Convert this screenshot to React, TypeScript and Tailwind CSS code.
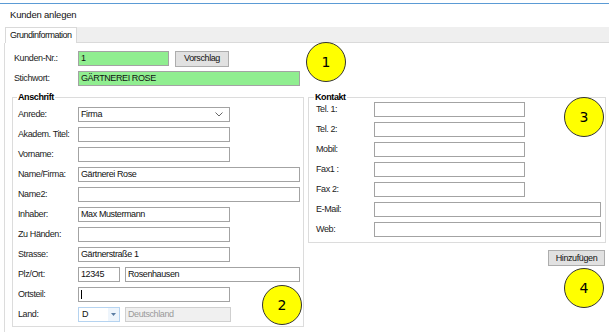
import { ReactNode } from "react";

const FONT = "font-['Liberation_Sans',Arial,sans-serif]";

function Field({
  value = "",
  width,
  green = false,
  cursor = false,
}: {
  value?: string;
  width: string;
  green?: boolean;
  cursor?: boolean;
}) {
  return (
    <div
      className={`${width} h-[15px] border border-[#a3a3a3] ${
        green ? "bg-[#90ee90]" : "bg-white"
      } flex items-center px-[2px] text-[9px] leading-none tracking-[-0.4px] text-[#111]`}
    >
      {cursor && <span className="w-px h-[9px] bg-black" />}
      {value}
    </div>
  );
}

function Row({ label, labelWidth, children }: { label: string; labelWidth: string; children: ReactNode }) {
  return (
    <div className="flex items-center h-[15px]">
      <span className={`${labelWidth} shrink-0 text-[9px] leading-none tracking-[-0.4px] text-[#222]`}>{label}</span>
      {children}
    </div>
  );
}

function Marker({ n, pos }: { n: number; pos: string }) {
  return (
    <div
      className={`absolute ${pos} w-[40px] h-[40px] rounded-full bg-[#ffff00] border border-[#333] flex items-center justify-center text-[14px] text-black font-['DejaVu_Sans',sans-serif]`}
    >
      {n}
    </div>
  );
}

export default function App() {
  return (
    <div className={`relative w-[613px] h-[332px] bg-white overflow-hidden ${FONT}`}>
      {/* Fensterrahmen oben */}
      <div className="mt-[3px] h-px w-[609px] bg-[#5b9bd5]" />
      <div className="h-[23px] pl-[10px] flex items-center text-[9.5px] tracking-[-0.2px] text-[#111]">
        Kunden anlegen
      </div>

      {/* Tabs */}
      <div className="flex h-[16px] w-[609px]">
        <div className="ml-[5px] w-[72px] h-[16px] bg-white border border-b-0 border-[#d9d9d9] flex items-center pl-[4px] text-[9px] tracking-[-0.5px] text-[#111]">
          Grundinformation
        </div>
        <div className="flex-1 bg-[#efefef] border-b border-[#dadada]" />
      </div>

      {/* Tab-Inhalt */}
      <div className="ml-[4px] h-[289px] border-l border-[#dcdcdc] pl-[7px] pt-[8px]">
        <div className="flex flex-col gap-[5px] pl-[2px]">
          <Row label="Kunden-Nr.:" labelWidth="w-[64px]">
            <Field width="w-[91px]" green value="1" />
            <button className="ml-[6px] w-[54px] h-[16px] bg-[#e1e1e1] border border-[#adadad] text-[9px] tracking-[-0.4px] text-[#111] leading-none">
              Vorschlag
            </button>
          </Row>
          <Row label="Stichwort:" labelWidth="w-[64px]">
            <Field width="w-[222px]" green value="GÄRTNEREI ROSE" />
          </Row>
        </div>

        <div className="flex gap-[4px] mt-[6px]">
          {/* Anschrift */}
          <fieldset className="w-[292px] h-[235px] border border-[#dcdcdc] pl-[5px] pt-[5px]">
            <legend className="-ml-px px-[1px] text-[9px] leading-[10px] font-bold tracking-[-0.4px] text-black">
              Anschrift
            </legend>
            <div className="flex flex-col gap-[5px]">
              <Row label="Anrede:" labelWidth="w-[60px]">
                <div className="w-[152px] h-[15px] border border-[#a3a3a3] flex items-center justify-between px-[2px] text-[9px] tracking-[-0.4px] text-[#111]">
                  Firma
                  <svg width="8" height="5" viewBox="0 0 8 5" className="mr-[4px]">
                    <path d="M0.5 0.5 L4 4 L7.5 0.5" fill="none" stroke="#666" strokeWidth="1" />
                  </svg>
                </div>
              </Row>
              <Row label="Akadem. Titel:" labelWidth="w-[60px]">
                <Field width="w-[152px]" />
              </Row>
              <Row label="Vorname:" labelWidth="w-[60px]">
                <Field width="w-[152px]" />
              </Row>
              <Row label="Name/Firma:" labelWidth="w-[60px]">
                <Field width="w-[222px]" value="Gärtnerei Rose" />
              </Row>
              <Row label="Name2:" labelWidth="w-[60px]">
                <Field width="w-[222px]" />
              </Row>
              <Row label="Inhaber:" labelWidth="w-[60px]">
                <Field width="w-[152px]" value="Max Mustermann" />
              </Row>
              <Row label="Zu Händen:" labelWidth="w-[60px]">
                <Field width="w-[152px]" />
              </Row>
              <Row label="Strasse:" labelWidth="w-[60px]">
                <Field width="w-[152px]" value="Gärtnerstraße 1" />
              </Row>
              <Row label="Plz/Ort:" labelWidth="w-[60px]">
                <div className="flex gap-[5px]">
                  <Field width="w-[42px]" value="12345" />
                  <Field width="w-[175px]" value="Rosenhausen" />
                </div>
              </Row>
              <Row label="Ortsteil:" labelWidth="w-[60px]">
                <Field width="w-[152px]" cursor />
              </Row>
              <Row label="Land:" labelWidth="w-[60px]">
                <div className="flex gap-[5px]">
                  <div className="w-[42px] h-[15px] border border-[#b5d3f0] flex items-center text-[9px] tracking-[-0.4px] text-[#111]">
                    <span className="flex-1 pl-[3px]">D</span>
                    <div className="w-[11px] h-full bg-[#eef5fc] flex items-center justify-center">
                      <svg width="5" height="3" viewBox="0 0 5 3">
                        <path d="M0 0 H5 L2.5 3 Z" fill="#5b7da3" />
                      </svg>
                    </div>
                  </div>
                  <div className="w-[106px] h-[15px] border border-[#cfcfcf] bg-[#f0f0f0] flex items-center px-[2px] text-[9px] tracking-[-0.4px] text-[#9a9a9a]">
                    Deutschland
                  </div>
                </div>
              </Row>
            </div>
          </fieldset>

          {/* Kontakt + Button */}
          <div className="flex flex-col items-end">
            <fieldset className="w-[298px] h-[151px] border border-[#dcdcdc] pl-[7px]">
              <legend className="-ml-[2px] px-[1px] text-[9px] leading-[10px] font-bold tracking-[-0.4px] text-black">
                Kontakt
              </legend>
              <div className="flex flex-col gap-[5px]">
                <Row label="Tel. 1:" labelWidth="w-[58px]">
                  <Field width="w-[151px]" />
                </Row>
                <Row label="Tel. 2:" labelWidth="w-[58px]">
                  <Field width="w-[151px]" />
                </Row>
                <Row label="Mobil:" labelWidth="w-[58px]">
                  <Field width="w-[151px]" />
                </Row>
                <Row label="Fax1 :" labelWidth="w-[58px]">
                  <Field width="w-[151px]" />
                </Row>
                <Row label="Fax 2:" labelWidth="w-[58px]">
                  <Field width="w-[151px]" />
                </Row>
                <Row label="E-Mail:" labelWidth="w-[58px]">
                  <Field width="w-[227px]" />
                </Row>
                <Row label="Web:" labelWidth="w-[58px]">
                  <Field width="w-[227px]" />
                </Row>
              </div>
            </fieldset>
            <button className="mt-[7px] mr-px w-[57px] h-[16px] bg-[#e1e1e1] border border-[#adadad] text-[9px] tracking-[-0.4px] text-[#111] leading-none">
              Hinzufügen
            </button>
          </div>
        </div>
      </div>

      {/* Markierungen */}
      <Marker n={1} pos="left-[306px] top-[42px]" />
      <Marker n={2} pos="left-[262px] top-[285px]" />
      <Marker n={3} pos="left-[564px] top-[97px]" />
      <Marker n={4} pos="left-[564px] top-[268px]" />
    </div>
  );
}
